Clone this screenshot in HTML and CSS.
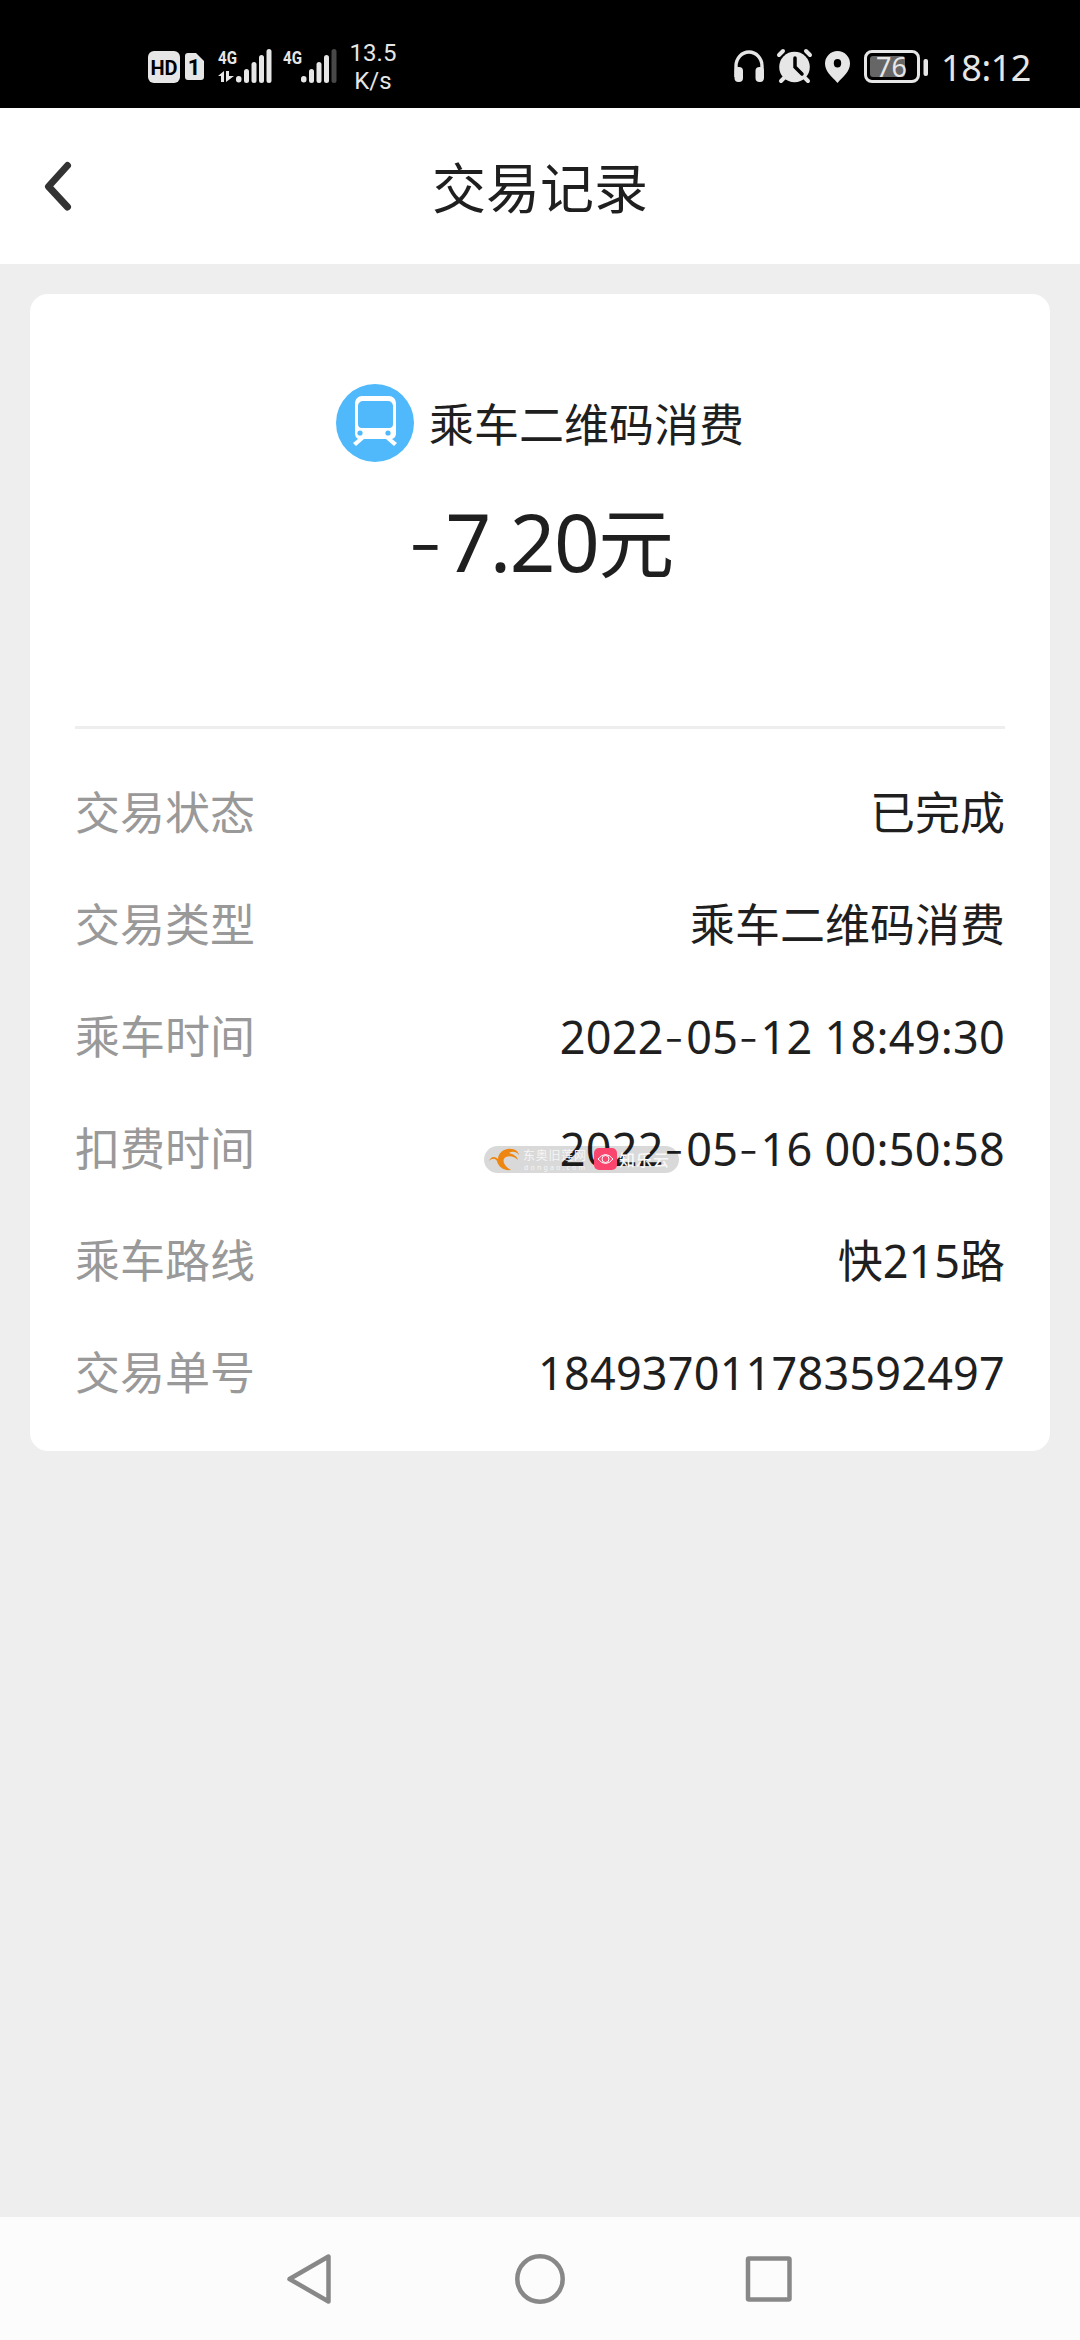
FILE: index.html
```html
<!DOCTYPE html>
<html lang="zh-CN">
<head>
<meta charset="utf-8">
<title>交易记录</title>
<link rel="stylesheet" href="styles.css">
</head>
<body>
<div class="screen">
  <div class="status">
    <svg class="status-left" width="200" height="48" viewBox="0 0 200 48" fill="#e6e6e6">
      <rect x="1" y="9" width="32" height="32" rx="6"/>
      <text x="17" y="32.500" class="hd">HD</text>
      <path d="M41 11h8l8 8v16a3 3 0 0 1-3 3H41a3 3 0 0 1-3-3V14a3 3 0 0 1 3-3z"/>
      <text x="47" y="33" class="sim">1</text>
      <text x="71" y="21.500" class="net" textLength="19" lengthAdjust="spacingAndGlyphs">4G</text>
      <path d="M71 34l6-5v11h-3v-6zM79 29h3v5h5l-8 6z"/>
      <rect x="89" y="34" width="5.500" height="6.500" rx="2.700"/><rect x="97" y="27" width="5" height="14" rx="2.500"/><rect x="104.500" y="20" width="5" height="21" rx="2.500"/><rect x="112" y="13" width="5" height="28" rx="2.500"/><rect x="119.500" y="7" width="5" height="34" rx="2.500"/>
      <text x="136" y="21.500" class="net" textLength="19" lengthAdjust="spacingAndGlyphs">4G</text>
      <rect x="154" y="34" width="5.500" height="6.500" rx="2.700"/><rect x="162" y="27" width="5" height="14" rx="2.500"/><rect x="169.500" y="20" width="5" height="21" rx="2.500"/><rect x="177" y="13" width="5" height="28" rx="2.500"/><rect x="184.500" y="7" width="5" height="34" rx="2.500" fill="#484848"/>
    </svg>
    <div class="speed"><span>13.5</span><span>K/s</span></div>
    <svg class="status-right" width="196" height="40" viewBox="0 0 196 40" fill="#e6e6e6">
      <path d="M3 30V19a13 14 0 0 1 26 0v11" fill="none" stroke="#e6e6e6" stroke-width="3.400"/>
      <rect x="1.500" y="20" width="8.500" height="15" rx="4"/><rect x="22.500" y="20" width="8.500" height="15" rx="4"/>
      <circle cx="61.500" cy="20" r="15.300"/>
      <path d="M46 8l4-4M77 8l-4-4M48 34l4-4M75 34l-4-4" stroke="#e6e6e6" stroke-width="4" stroke-linecap="round"/>
      <path d="M62 11v9l7 7" fill="none" stroke="#000" stroke-width="3.500" stroke-linecap="round"/>
      <path fill-rule="evenodd" d="M104.500 4a12.500 12.500 0 0 1 12.500 12.500c0 8-6 12-12.500 19.500C98 28.500 92 24.500 92 16.500A12.500 12.500 0 0 1 104.500 4zm0 8a3.700 4.200 0 1 0 0 8.400 3.700 4.200 0 0 0 0-8.400z"/>
      <rect x="132.500" y="4.500" width="53" height="30" rx="6.500" fill="none" stroke="#e6e6e6" stroke-width="3"/>
      <rect x="137" y="9" width="35" height="21" rx="3" fill="#666"/>
      <text x="158.500" y="30" class="level">76</text>
      <rect x="190.500" y="12" width="4.500" height="17" rx="2"/>
    </svg>
    <span class="clock">18:12</span>
  </div>

  <header class="header">
    <svg class="back" width="34" height="54" viewBox="0 0 34 54"><path d="M28.500 6.500L9.500 27.500 28.500 48" fill="none" stroke="#333" stroke-width="7" stroke-linecap="round" stroke-linejoin="round"/></svg>
    <h1 class="title">交易记录</h1>
  </header>

  <main class="main">
    <section class="card">
      <div class="merchant">
        <svg width="78" height="78" viewBox="0 0 78 78">
          <circle cx="39" cy="39" r="39" fill="#50b9fb"/>
          <path fill="#fff" fill-rule="evenodd" d="M26 12h27a7 7 0 0 1 7 7v31a6 6 0 0 1-4 5l5 4-3 3-8-7H28l-8 7-3-3 5-4a6 6 0 0 1-3-5V19a7 7 0 0 1 7-7zm1 5a5 5 0 0 0-5 5v18a4 4 0 0 0 4 4h27a4 4 0 0 0 4-4V22a5 5 0 0 0-5-5z"/>
          <circle cx="24" cy="49" r="2.600" fill="#50b9fb"/><circle cx="52" cy="49" r="2.600" fill="#50b9fb"/>
        </svg>
        <span class="merchant-name">乘车二维码消费</span>
      </div>
      <div class="amount"><span class="dash">-</span>7.20<span class="unit">元</span></div>
      <dl class="details">
        <div class="row"><dt>交易状态</dt><dd>已完成</dd></div>
        <div class="row"><dt>交易类型</dt><dd>乘车二维码消费</dd></div>
        <div class="row"><dt>乘车时间</dt><dd class="time">2022<span class="dash">-</span>05<span class="dash">-</span>12 18:49:30</dd></div>
        <div class="row"><dt>扣费时间</dt><dd class="time">2022<span class="dash">-</span>05<span class="dash">-</span>16 00:50:58</dd></div>
        <div class="row"><dt>乘车路线</dt><dd>快215路</dd></div>
        <div class="row"><dt>交易单号</dt><dd class="serial">184937011783592497</dd></div>
      </dl>
      <svg class="stamp" width="250" height="36" viewBox="0 0 250 36">
        <rect x="3" y="5" width="195" height="27" rx="13.500" fill="#000" fill-opacity=".15"/>
        <path d="M8 20c2-5 6-5 9-2 0-7 8-11 13-10 4 0 7 2 8 6-3-4-7-4-10-2 4 1 8 3 9 7-3-3-8-5-12-3-5 3-2 9 5 13-8 1-13-4-14-9-2-3-5-3-8 0z" fill="#ee8612"/>
        <text x="42" y="19" class="stamp-cn" textLength="63">东奥旧莲网</text>
        <text x="43" y="29" class="stamp-en" textLength="61">dongao.com</text>
        <rect x="113" y="7" width="23" height="22" rx="5" fill="#fa456f"/>
        <path d="M117 18q7.500-9 15 0-7.500 9-15 0z" fill="none" stroke="#fff" stroke-width="1"/>
        <circle cx="124.500" cy="18" r="3.500" fill="none" stroke="#fff" stroke-width="1"/>
        <text x="138" y="25" class="stamp-brand" textLength="50">知乐云</text>
      </svg>
    </section>
  </main>

  <nav class="nav">
    <svg width="56" height="56" viewBox="0 0 56 56"><path d="M45.500 5.500v45L6.500 28z"/></svg>
    <svg width="56" height="56" viewBox="0 0 56 56"><circle cx="28" cy="28" r="22.700"/></svg>
    <svg width="56" height="56" viewBox="0 0 56 56"><rect x="7" y="7.500" width="41.500" height="41" rx="1"/></svg>
  </nav>
</div>
</body>
</html>
```
FILE: styles.css
```css
* { box-sizing: border-box; }
body {
  margin: 0;
  font-family: "Noto Sans", "Noto Sans CJK SC", sans-serif;
  color: #1f1f1f;
}
.screen {
  width: 1080px;
  height: 2340px;
  display: flex;
  flex-direction: column;
  background: #eee;
}
.status {
  height: 108px;
  background: #000;
  color: #e6e6e6;
  display: flex;
  align-items: center;
  padding: 24px 0 0 147px;
}
.status-left { flex: none; }
.hd { font: 700 20px Roboto, sans-serif; fill: #000; text-anchor: middle; }
.sim { font: 700 22px Roboto, sans-serif; fill: #000; text-anchor: middle; }
.net { font: 700 19px Roboto, sans-serif; }
.level { font: 400 27px "Noto Sans", sans-serif; text-anchor: middle; }
.speed {
  width: 52px;
  display: flex;
  flex-direction: column;
  align-items: center;
  font: 24px/28px Roboto, sans-serif;
  padding-top: 2px;
}
.status-right { margin: 2px 0 0 334px; }
.clock {
  margin-left: 12px;
  padding-top: 2px;
  font-size: 36px;
  letter-spacing: -.4px;
  white-space: nowrap;
}
.header {
  height: 156px;
  background: #fff;
  display: grid;
  grid-template-columns: 120px 1fr 120px;
  align-items: center;
}
.back { margin-left: 39px; }
.title {
  margin: 0 0 2px;
  text-align: center;
  font-size: 54px;
  font-weight: 400;
}
.main { flex: 1; padding: 30px; }
.card {
  position: relative;
  height: 1157px;
  border-radius: 18px;
  background: #fff;
  padding: 90px 45px 0;
}
.merchant {
  height: 78px;
  display: flex;
  justify-content: center;
  align-items: center;
  gap: 15px;
  font-size: 45px;
}
.merchant-name { line-height: 78px; padding-top: 3px; }
.amount {
  height: 267px;
  padding-top: 29px;
  border-bottom: 3px solid #eee;
  text-align: center;
  font-size: 80px;
  line-height: 100px;
  letter-spacing: -1.500px;
}
.unit { font-size: 76px; }
.dash { font-family: Inter, sans-serif; font-weight: 300; }
.amount .dash { letter-spacing: 2px; }
.details { margin: 0; padding-top: 28px; }
.row {
  height: 112px;
  display: flex;
  justify-content: space-between;
  align-items: center;
  font-size: 45px;
  line-height: 60px;
}
dt { color: #999; }
dd { margin: 0; }
.serial { letter-spacing: .2px; }
.time { letter-spacing: .250px; }
.time .dash { letter-spacing: 2px; }
.stamp {
  position: absolute;
  left: 451px;
  top: 847px;
}
.stamp-cn { font: 400 12px "Noto Sans CJK SC", sans-serif; fill: #f5f5f5; }
.stamp-en { font: 7px "Noto Sans", sans-serif; fill: #f5f5f5; }
.stamp-brand { font: 500 16px "Noto Sans CJK SC", sans-serif; fill: #f8f8f8; }
.nav {
  height: 123px;
  background: #fcfcfc;
  display: flex;
  justify-content: center;
  align-items: center;
  gap: 173px;
}
.nav svg { fill: none; stroke: #888; stroke-width: 4.500; stroke-linejoin: round; }
```
